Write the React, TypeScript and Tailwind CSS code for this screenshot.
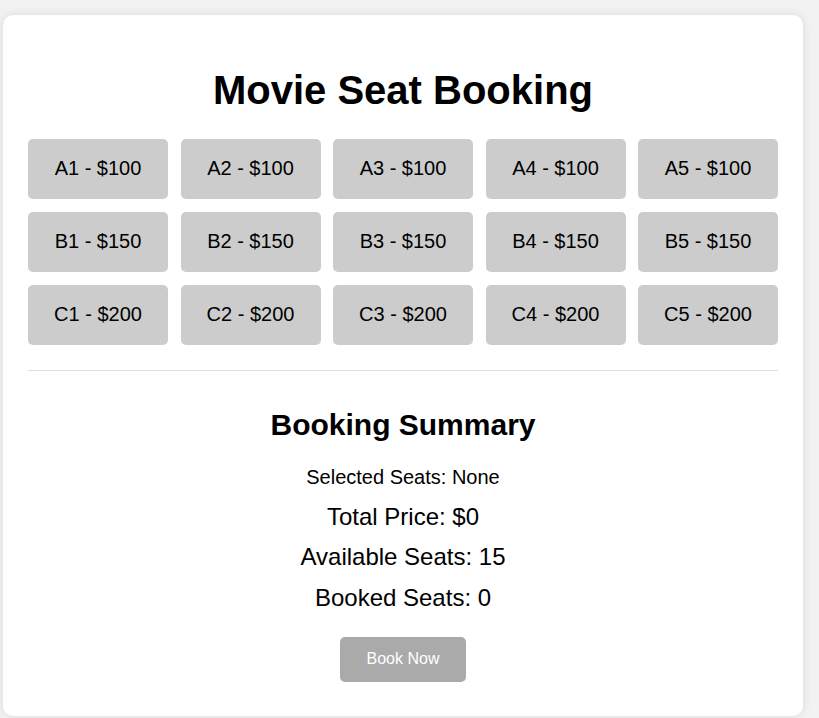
import React from 'react';

const rows = [
  { row: 'A', price: 100 },
  { row: 'B', price: 150 },
  { row: 'C', price: 200 },
];

const seats = rows.flatMap((r) =>
  [1, 2, 3, 4, 5].map((n) => ({ id: `${r.row}${n}`, price: r.price }))
);

const App = () => {
  return (
    <div className="min-h-[718px] bg-[#f2f2f2] pt-[15px] font-['Liberation_Sans',Arial,sans-serif] text-black">
      <div className="ml-[3px] w-[800px] rounded-[10px] bg-white px-[25px] pt-[25px] pb-[34px] shadow-[0_0_10px_rgba(0,0,0,0.1)]">
        <h1 className="mt-[27px] mb-[26px] text-center text-[40px] leading-[46px] font-bold">Movie Seat Booking</h1>

        <div className="grid grid-cols-5 gap-x-[12.5px] gap-y-[13px]">
          {seats.map((seat) => (
            <button
              key={seat.id}
              className="flex h-[60px] items-center justify-center rounded-[5px] bg-[#cccccc] pb-[3px] text-[20px] text-black"
            >
              {seat.id} - ${seat.price}
            </button>
          ))}
        </div>

        <div className="mt-[25px] h-px bg-[#dddddd]" />

        <div className="flex flex-col items-center text-center">
          <h2 className="mt-[37px] text-[30px] leading-[34px] font-bold">Booking Summary</h2>
          <p className="mt-[24px] text-[20px] leading-[23px]">Selected Seats: None</p>
          <p className="mt-[14px] text-[24px] leading-[28px]">Total Price: $0</p>
          <p className="mt-[12px] text-[24px] leading-[28px]">Available Seats: 15</p>
          <p className="mt-[13px] text-[24px] leading-[28px]">Booked Seats: 0</p>
          <button className="mt-[25px] h-[45px] w-[126px] rounded-[5px] bg-[#aaaaaa] pb-[2px] text-[16px] text-white">
            Book Now
          </button>
        </div>
      </div>
    </div>
  );
};

export default App;
